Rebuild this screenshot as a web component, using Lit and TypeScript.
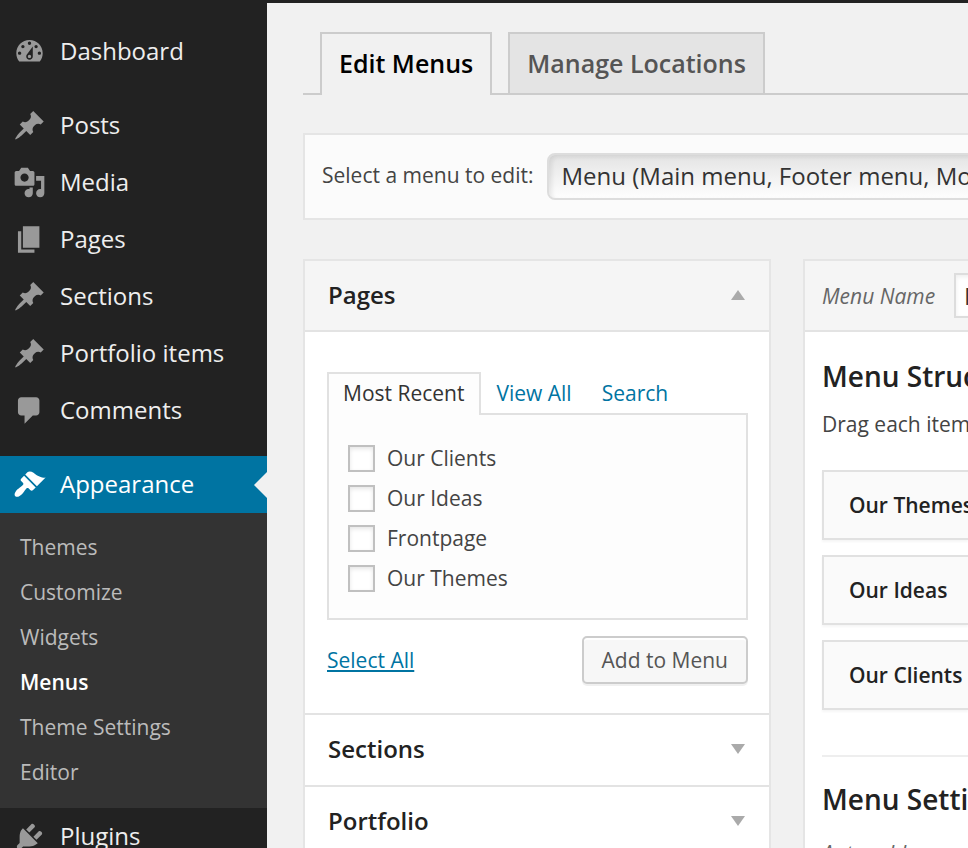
import { LitElement, html, css, svg } from "lit";
import { customElement, property, state } from "lit/decorators.js";
import { classMap } from "lit/directives/class-map.js";

const ICONS: Record<string, string> = {
  dashboard:
    "M3.76 16h12.48c1.1-1.37 1.76-3.11 1.76-5 0-4.42-3.58-8-8-8s-8 3.58-8 8c0 1.89.66 3.63 1.76 5zM10 4c.55 0 1 .45 1 1s-.45 1-1 1-1-.45-1-1 .45-1 1-1zM6 6c.55 0 1 .45 1 1s-.45 1-1 1-1-.45-1-1 .45-1 1-1zm8 0c.55 0 1 .45 1 1s-.45 1-1 1-1-.45-1-1 .45-1 1-1zm-5.37 5.55L12 7v6c0 1.1-.9 2-2 2s-2-.9-2-2c0-.57.24-1.08.63-1.45zM4 10c.55 0 1 .45 1 1s-.45 1-1 1-1-.45-1-1 .45-1 1-1zm12 0c.55 0 1 .45 1 1s-.45 1-1 1-1-.45-1-1 .45-1 1-1zm-5 3c0-.55-.45-1-1-1s-1 .45-1 1 .45 1 1 1 1-.45 1-1z",
  pin: "M10.44 3.02l1.82-1.82 6.36 6.35-1.83 1.82c-1.05-.68-2.48-.57-3.41.36l-.75.75c-.92.93-1.04 2.35-.35 3.41l-1.83 1.82-2.41-2.41-2.8 2.79c-.42.42-3.38 2.71-3.8 2.29s1.86-3.39 2.28-3.81l2.79-2.79L4.1 9.36l1.83-1.82c1.05.69 2.48.57 3.4-.36l.75-.75c.93-.92 1.05-2.35.36-3.41z",
  media:
    "M13 11V4c0-.55-.45-1-1-1h-1.67L9 1H5L3.67 3H2c-.55 0-1 .45-1 1v7c0 .55.45 1 1 1h10c.55 0 1-.45 1-1zM7 4.5c1.38 0 2.5 1.12 2.5 2.5S8.38 9.5 7 9.5 4.5 8.38 4.5 7 5.62 4.5 7 4.5zM14 6h5v10.5c0 1.38-1.12 2.5-2.5 2.5S14 17.88 14 16.5s1.12-2.5 2.5-2.5c.17 0 .34.02.5.05V9h-3V6zm-4 8.05V13h2v3.5c0 1.38-1.12 2.5-2.5 2.5S7 17.88 7 16.5 8.12 14 9.5 14c.17 0 .34.02.5.05z",
  page: "M6 15V2h10v13H6zm-1 1h8v2H3V5h2v11z",
  comments:
    "M5 2h9c1.1 0 2 .9 2 2v7c0 1.1-.9 2-2 2h-2l-5 5v-5H5c-1.1 0-2-.9-2-2V4c0-1.1.9-2 2-2z",
  appearance:
    "M14.48 11.06L7.41 3.99l1.5-1.5c.5-.56 2.3-.47 3.51.32 1.21.8 1.43 1.28 2.91 2.1 1.18.64 2.45 1.26 4.45.85zm-.71.71L6.7 4.7 4.93 6.47c-.39.39-.39 1.02 0 1.41l1.06 1.06c.39.39.39 1.03 0 1.42-.6.6-1.43 1.11-2.21 1.69-.35.26-.7.53-1.01.84C1.43 14.23.4 16.08 1.4 17.07c.99 1 2.84-.03 4.18-1.36.31-.31.58-.66.85-1.02.57-.78 1.08-1.61 1.69-2.21.39-.39 1.02-.39 1.41 0l1.06 1.06c.39.39 1.02.39 1.41 0z",
  plugins:
    "M13.11 4.36L9.87 7.6 8 5.73l3.24-3.24c.35-.34 1.05-.2 1.56.32.52.51.66 1.21.31 1.55zm-8 1.77l.91-1.12 9.01 9.01-1.19.84c-.71.71-2.63 1.16-3.82 1.16H6.14L4.9 17.26c-.59.59-1.54.59-2.12 0-.59-.58-.59-1.53 0-2.12l1.24-1.24v-3.88c0-1.13.4-3.19 1.09-3.89zm7.26 3.97l3.24-3.24c.34-.35 1.04-.21 1.55.31.52.51.66 1.21.31 1.55l-3.24 3.25z",
};

interface NavEntry {
  label: string;
  icon: string;
  children?: string[];
}

const NAV_GROUPS: NavEntry[][] = [
  [{ label: "Dashboard", icon: "dashboard" }],
  [
    { label: "Posts", icon: "pin" },
    { label: "Media", icon: "media" },
    { label: "Pages", icon: "page" },
    { label: "Sections", icon: "pin" },
    { label: "Portfolio items", icon: "pin" },
    { label: "Comments", icon: "comments" },
  ],
  [
    {
      label: "Appearance",
      icon: "appearance",
      children: ["Themes", "Customize", "Widgets", "Menus", "Theme Settings", "Editor"],
    },
    { label: "Plugins", icon: "plugins" },
  ],
];

@customElement("admin-sidebar")
class AdminSidebar extends LitElement {
  @property() current = "Menus";

  static styles = css`
    :host {
      display: block;
      background: #222;
      font-size: 24px;
      line-height: 33px;
    }
    .nav {
      display: flex;
      flex-direction: column;
      gap: 17px;
      padding-top: 23px;
    }
    .group,
    .sub {
      list-style: none;
      margin: 0;
      padding: 0;
    }
    .link {
      display: flex;
      align-items: center;
      gap: 14px;
      padding: 12px 13px;
      color: #eee;
      text-decoration: none;
      white-space: nowrap;
    }
    .text {
      padding-bottom: 2px;
      line-height: 31px;
    }
    .icon {
      flex: none;
      width: 33px;
      height: 33px;
      fill: #999;
    }
    .open {
      position: relative;
      background: #0074a2;
      color: #fff;
    }
    .open .icon {
      fill: #fff;
    }
    .open::after {
      content: "";
      position: absolute;
      right: 0;
      top: 50%;
      margin-top: -13px;
      border: 13px solid transparent;
      border-left-width: 0;
      border-right-color: #f1f1f1;
    }
    .sub {
      background: #333;
      padding: 12px 0 13px;
      font-size: 21px;
    }
    .sublink {
      display: block;
      padding: 6px 20px;
      color: #bbb;
      text-decoration: none;
    }
    .current {
      color: #fff;
      font-weight: 600;
    }
  `;

  render() {
    return html`<nav class="nav">
      ${NAV_GROUPS.map(
        (group) => html`<ul class="group">
          ${group.map(
            (item) => html`<li>
              <a href="#" class=${classMap({ link: true, open: !!item.children })}>
                <svg class="icon" viewBox="0 0 20 20" aria-hidden="true">
                  ${svg`<path fill-rule="evenodd" d=${ICONS[item.icon]}></path>`}
                </svg>
                <span class="text">${item.label}</span>
              </a>
              ${item.children
                ? html`<ul class="sub">
                    ${item.children.map(
                      (name) => html`<li>
                        <a href="#" class=${classMap({ sublink: true, current: name === this.current })}
                          >${name}</a
                        >
                      </li>`
                    )}
                  </ul>`
                : null}
            </li>`
          )}
        </ul>`
      )}
    </nav>`;
  }
}

@customElement("page-picker")
class PagePicker extends LitElement {
  @state() private checked = new Set<string>();

  private pages = ["Our Clients", "Our Ideas", "Frontpage", "Our Themes"];

  static styles = css`
    :host {
      display: block;
      border: 2px solid #e5e5e5;
      background: #fff;
    }
    .head {
      display: flex;
      width: 100%;
      box-sizing: border-box;
      align-items: center;
      justify-content: space-between;
      padding: 17px 24px 19px 23px;
      border: 0;
      border-top: 2px solid #e3e3e3;
      background: #fff;
      color: #222;
      font: 600 24px/34px "Open Sans", sans-serif;
    }
    .expanded {
      padding-bottom: 18px;
      border-top: 0;
      border-bottom: 2px solid #e3e3e3;
      background: #f5f5f5;
    }
    .arrow {
      border: 7px solid transparent;
      border-top: 10px solid #aaa;
      border-bottom-width: 0;
    }
    .expanded .arrow {
      border-top-width: 0;
      border-bottom: 10px solid #aaa;
    }
    .body {
      padding: 40px 21px 29px 22px;
    }
    .tabs {
      display: flex;
      line-height: 28px;
    }
    .tab {
      padding: 7px 15px 6px;
      color: #0074a2;
      text-decoration: none;
    }
    .active {
      position: relative;
      margin-bottom: -2px;
      padding: 5px 15px 6px 14px;
      border: 2px solid #e1e1e1;
      border-bottom: 0;
      background: #fdfdfd;
      color: #333;
    }
    .list {
      display: flex;
      flex-direction: column;
      gap: 10px;
      padding: 28px 19px 25px;
      border: 2px solid #e1e1e1;
      background: #fdfdfd;
    }
    .item {
      display: flex;
      align-items: center;
      gap: 12px;
      line-height: 30px;
    }
    .box {
      appearance: none;
      flex: none;
      width: 27px;
      height: 27px;
      margin: 0;
      border: 2px solid #c0c0c0;
      background: #fff;
      box-shadow: inset 0 2px 4px rgba(0, 0, 0, 0.1);
    }
    .box:checked {
      background: #0074a2;
    }
    .actions {
      display: flex;
      align-items: center;
      justify-content: space-between;
      padding-top: 16px;
    }
    .all {
      color: #0074a2;
    }
    .add {
      padding: 7px 18px;
      border: 2px solid #ccc;
      border-radius: 5px;
      background: #f7f7f7;
      box-shadow: inset 0 2px 0 #fff, 0 2px 0 rgba(0, 0, 0, 0.06);
      color: #555;
      font: 21px/30px "Open Sans", sans-serif;
    }
  `;

  private toggle(name: string) {
    const next = new Set(this.checked);
    if (!next.delete(name)) next.add(name);
    this.checked = next;
  }

  private selectAll(e: Event) {
    e.preventDefault();
    this.checked = new Set(this.pages);
  }

  render() {
    return html`
      <button class="head expanded"><span>Pages</span><span class="arrow"></span></button>
      <div class="body">
        <div class="tabs">
          <a href="#" class="tab active">Most Recent</a>
          <a href="#" class="tab">View All</a>
          <a href="#" class="tab">Search</a>
        </div>
        <div class="list">
          ${this.pages.map(
            (name) => html`<label class="item">
              <input
                class="box"
                type="checkbox"
                .checked=${this.checked.has(name)}
                @change=${() => this.toggle(name)}
              />${name}
            </label>`
          )}
        </div>
        <div class="actions">
          <a href="#" class="all" @click=${this.selectAll}>Select All</a>
          <button class="add">Add to Menu</button>
        </div>
      </div>
      <button class="head"><span>Sections</span><span class="arrow"></span></button>
      <button class="head"><span>Portfolio</span><span class="arrow"></span></button>
    `;
  }
}

@customElement("menu-editor")
class MenuEditor extends LitElement {
  static styles = css`
    :host {
      display: block;
      border: 2px solid #e5e5e5;
      border-right: 0;
      background: #fff;
      white-space: nowrap;
    }
    .head {
      display: flex;
      align-items: center;
      gap: 19px;
      padding: 12px 0 12px 17px;
      border-bottom: 2px solid #e3e3e3;
      background: #f5f5f5;
    }
    .label {
      color: #666;
      font-style: italic;
    }
    .name {
      box-sizing: border-box;
      width: 300px;
      padding: 4px 8px;
      border: 2px solid #ddd;
      box-shadow: inset 0 2px 4px rgba(0, 0, 0, 0.07);
      color: #333;
      font: 24px/33px "Open Sans", sans-serif;
    }
    .body {
      padding: 24px 0 0 17px;
    }
    .title {
      margin: 0;
      color: #222;
      font-size: 28px;
      font-weight: 600;
      line-height: 40px;
    }
    .hint {
      margin: 12px 0 30px;
      line-height: 32px;
    }
    .items {
      display: flex;
      flex-direction: column;
      gap: 15px;
      margin: 0;
      padding: 0 0 45px;
      border-bottom: 2px solid #eee;
      list-style: none;
    }
    .item {
      padding: 17px 25px;
      border: 2px solid #e1e1e1;
      border-right: 0;
      background: #fafafa;
      box-shadow: 0 2px 2px rgba(0, 0, 0, 0.04);
      color: #222;
      font-weight: 600;
      line-height: 32px;
    }
    .settings {
      padding-top: 22px;
    }
    .legend {
      margin: 18px 0 12px;
      color: #666;
      font-style: italic;
      line-height: 32px;
    }
  `;

  render() {
    return html`
      <div class="head">
        <label class="label" for="menu-name">Menu Name</label>
        <input class="name" id="menu-name" type="text" value="Menu" />
      </div>
      <div class="body">
        <h3 class="title">Menu Structure</h3>
        <p class="hint">Drag each item into the order you prefer.</p>
        <ul class="items">
          ${["Our Themes", "Our Ideas", "Our Clients"].map((n) => html`<li class="item">${n}</li>`)}
        </ul>
        <div class="settings">
          <h3 class="title">Menu Settings</h3>
          <p class="legend">Auto add pages</p>
        </div>
      </div>
    `;
  }
}

@customElement("app-root")
class AppRoot extends LitElement {
  static styles = css`
    :host {
      display: grid;
      grid-template-columns: 267px minmax(0, 1fr);
      height: 100vh;
      overflow: hidden;
      background: #f1f1f1;
      color: #444;
      font: 21px/30px "Open Sans", sans-serif;
    }
    .main {
      padding: 29px 0 0 36px;
      border-top: 3px solid #222;
      overflow: hidden;
    }
    .tabs {
      display: flex;
      gap: 16px;
      padding-left: 17px;
      border-bottom: 2px solid #ccc;
      font-size: 25px;
      font-weight: 600;
      line-height: 34px;
      white-space: nowrap;
    }
    .tab {
      padding: 12px 17px 13px;
      border: 2px solid #ccc;
      border-bottom: 0;
      background: #e4e4e4;
      color: #555;
      text-decoration: none;
    }
    .active {
      margin-bottom: -2px;
      padding-bottom: 15px;
      background: #f1f1f1;
      color: #000;
    }
    .chooser {
      display: flex;
      align-items: center;
      gap: 13px;
      margin: 38px 0 39px;
      padding: 18px 0 18px 17px;
      border: 2px solid #e5e5e5;
      border-right: 0;
      background: #fbfbfb;
      white-space: nowrap;
    }
    .caption {
      padding-bottom: 3px;
    }
    .select {
      appearance: none;
      flex: none;
      padding: 5px 13px 6px;
      border: 2px solid #ddd;
      border-radius: 8px;
      background: linear-gradient(#e4e4e4, #fefefe);
      box-shadow: inset 3px 2px 4px rgba(0, 0, 0, 0.08);
      color: #333;
      font: 24px/32px "Open Sans", sans-serif;
    }
    .columns {
      display: grid;
      grid-template-columns: 468px minmax(0, 1fr);
      gap: 32px;
      align-items: start;
    }
  `;

  render() {
    return html`
      <admin-sidebar current="Menus"></admin-sidebar>
      <main class="main">
        <nav class="tabs">
          <a href="#" class="tab active">Edit Menus</a>
          <a href="#" class="tab">Manage Locations</a>
        </nav>
        <div class="chooser">
          <label class="caption" for="menu-select">Select a menu to edit:</label>
          <select class="select" id="menu-select">
            <option>Menu (Main menu, Footer menu, Mobile menu)</option>
          </select>
        </div>
        <div class="columns">
          <page-picker></page-picker>
          <menu-editor></menu-editor>
        </div>
      </main>
    `;
  }
}
